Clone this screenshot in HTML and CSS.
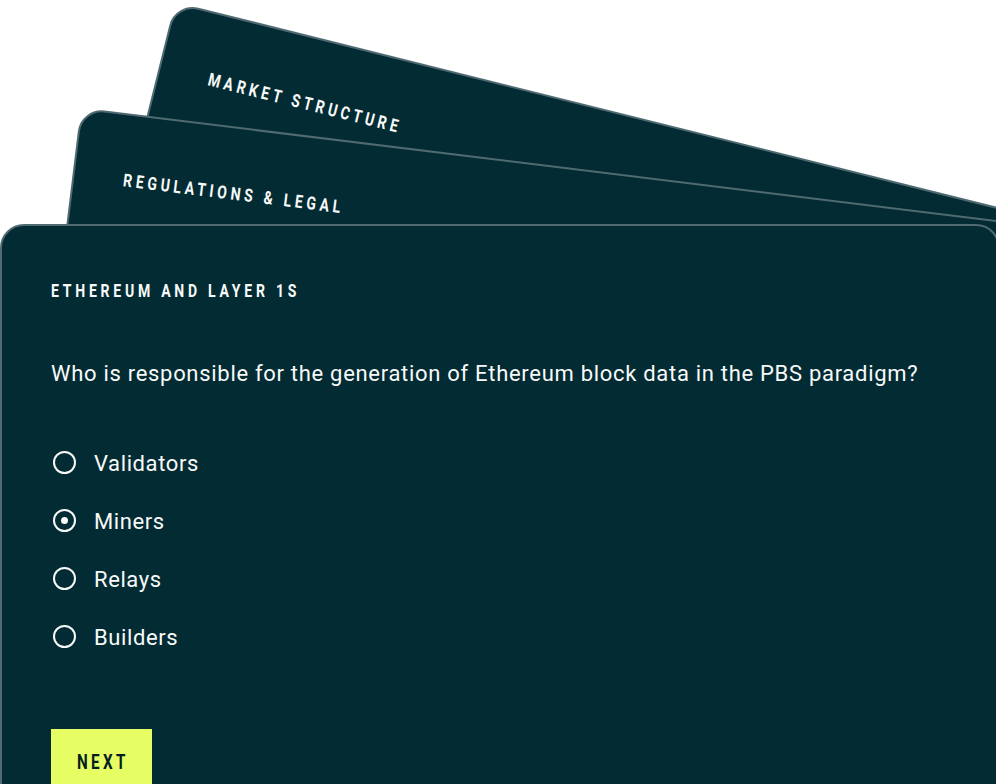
FILE: index.html
```html
<!DOCTYPE html>
<html lang="en">
<head>
<meta charset="utf-8">
<title>Quiz</title>
<link rel="stylesheet" href="styles.css">
</head>
<body>
<div class="deck">
  <section class="card card--back2">
    <p class="label"><span class="label-text">MARKET STRUCTURE</span></p>
  </section>
  <section class="card card--back1">
    <p class="label"><span class="label-text">REGULATIONS &amp; LEGAL</span></p>
  </section>
  <section class="card card--front">
    <p class="label"><span class="label-text">ETHEREUM AND LAYER 1S</span></p>
    <h2 class="question">Who is responsible for the generation of Ethereum block data in the PBS paradigm?</h2>
    <ul class="options">
      <li class="option"><span class="radio"></span><span class="option-text">Validators</span></li>
      <li class="option"><span class="radio radio--checked"></span><span class="option-text">Miners</span></li>
      <li class="option"><span class="radio"></span><span class="option-text">Relays</span></li>
      <li class="option"><span class="radio"></span><span class="option-text">Builders</span></li>
    </ul>
    <button class="next" type="button"><span class="next-text">NEXT</span></button>
  </section>
</div>
</body>
</html>
```
FILE: styles.css
```css
html, body {
  margin: 0;
  padding: 0;
  background: #ffffff;
  overflow: hidden;
  width: 996px;
  height: 784px;
}

body {
  font-family: Roboto, "Liberation Sans", Arial, sans-serif;
  color: #f8faf9;
}

.deck {
  display: grid;
  margin-top: 224px;
  width: 1000px;
}

.card {
  grid-area: 1 / 1;
  box-sizing: border-box;
  width: 1000px;
  height: 602px;
  background: #032b33;
  border: 2px solid #4f6a70;
  border-radius: 24px;
  padding: 56px 0 0 49px;
  display: flex;
  flex-direction: column;
  align-items: flex-start;
  transform-origin: 992px 602px;
}

.card--back2 {
  transform: rotate(14deg);
  z-index: 1;
}

.card--back1 {
  transform: rotate(7deg);
  z-index: 2;
}

.card--front {
  z-index: 3;
}

.label {
  margin: 0;
  height: 18px;
  font-size: 18px;
  line-height: 18px;
  font-weight: 700;
  white-space: nowrap;
}

.label-text {
  display: inline-block;
  letter-spacing: 4.8px;
  transform: scaleX(0.78);
  transform-origin: 0 50%;
}

.question {
  margin: 59px 0 0 0;
  font-size: 22px;
  line-height: 30px;
  font-weight: 400;
  letter-spacing: 0.7px;
  white-space: nowrap;
}

.options {
  list-style: none;
  margin: 45.5px 0 0 0;
  padding: 0;
}

.option {
  display: flex;
  align-items: center;
  height: 58px;
  font-size: 22px;
  line-height: 58px;
  letter-spacing: 0.6px;
}

.radio {
  box-sizing: border-box;
  width: 23px;
  height: 23px;
  margin: 0 18px 3px 2px;
  border: 2.3px solid #f8faf9;
  border-radius: 50%;
  display: flex;
  align-items: center;
  justify-content: center;
}

.radio--checked::after {
  content: "";
  width: 7px;
  height: 7px;
  border-radius: 50%;
  background: #f8faf9;
}

.next {
  margin-top: 62.5px;
  box-sizing: border-box;
  width: 101px;
  padding: 24px 0 22px 26px;
  border: 0;
  background: #e6fe64;
  text-align: left;
  font-family: Roboto, "Liberation Sans", Arial, sans-serif;
  font-size: 19.5px;
  line-height: 20px;
  font-weight: 700;
  color: #061d20;
  display: block;
}

.next-text {
  display: block;
  letter-spacing: 4.3px;
  transform: scaleX(0.78);
  transform-origin: 0 50%;
  white-space: nowrap;
}
```
